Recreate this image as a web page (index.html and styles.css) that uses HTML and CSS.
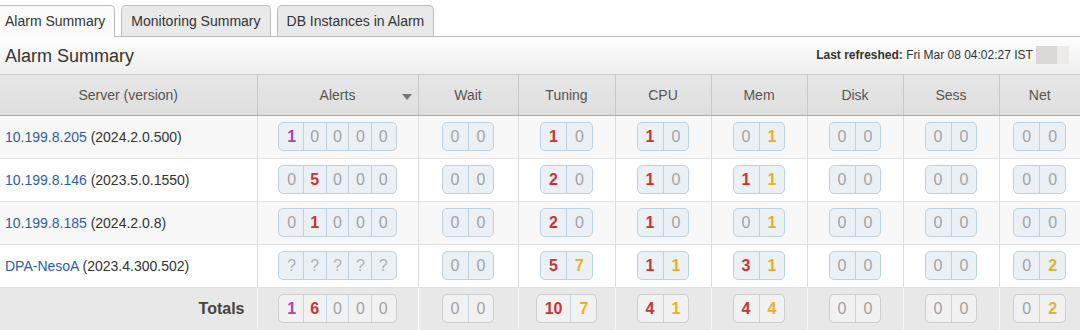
FILE: index.html
```html
<!DOCTYPE html>
<html lang="en">

<head>
    <meta charset="UTF-8">
    <meta name="viewport" content="width=device-width, initial-scale=1.0">
    <title>Alarm Summary</title>
    <link rel="stylesheet" href="styles.css">
</head>

<body>
    <ul class="tabs">
        <li class="tab active">Alarm Summary</li>
        <li class="tab">Monitoring Summary</li>
        <li class="tab">DB Instances in Alarm</li>
    </ul>

    <div class="titlebar">
        <h1>Alarm Summary</h1>
        <div class="refreshed">
            <b>Last refreshed:</b> Fri Mar 08 04:02:27 IST <span class="redacted"></span>
        </div>
    </div>

    <table class="summary">
        <colgroup>
            <col style="width:257px">
            <col style="width:161px">
            <col style="width:100px">
            <col style="width:97px">
            <col style="width:96px">
            <col style="width:96px">
            <col style="width:96px">
            <col style="width:96px">
            <col>
        </colgroup>
        <thead>
            <tr>
                <th>Server (version)</th>
                <th class="sorted">Alerts<span class="arrow"></span></th>
                <th>Wait</th>
                <th>Tuning</th>
                <th>CPU</th>
                <th>Mem</th>
                <th>Disk</th>
                <th>Sess</th>
                <th>Net</th>
            </tr>
        </thead>
        <tbody>
            <tr>
                <td class="server"><a href="#">10.199.8.205</a> (2024.2.0.500)</td>
                <td><span class="grp alerts"><span class="v p">1</span><span class="v">0</span><span class="v">0</span><span class="v">0</span><span class="v">0</span></span></td>
                <td><span class="grp"><span class="v">0</span><span class="v">0</span></span></td>
                <td><span class="grp"><span class="v r">1</span><span class="v">0</span></span></td>
                <td><span class="grp"><span class="v r">1</span><span class="v">0</span></span></td>
                <td><span class="grp"><span class="v">0</span><span class="v y">1</span></span></td>
                <td><span class="grp"><span class="v">0</span><span class="v">0</span></span></td>
                <td><span class="grp"><span class="v">0</span><span class="v">0</span></span></td>
                <td><span class="grp"><span class="v">0</span><span class="v">0</span></span></td>
            </tr>
            <tr>
                <td class="server"><a href="#">10.199.8.146</a> (2023.5.0.1550)</td>
                <td><span class="grp alerts"><span class="v">0</span><span class="v r">5</span><span class="v">0</span><span class="v">0</span><span class="v">0</span></span></td>
                <td><span class="grp"><span class="v">0</span><span class="v">0</span></span></td>
                <td><span class="grp"><span class="v r">2</span><span class="v">0</span></span></td>
                <td><span class="grp"><span class="v r">1</span><span class="v">0</span></span></td>
                <td><span class="grp"><span class="v r">1</span><span class="v y">1</span></span></td>
                <td><span class="grp"><span class="v">0</span><span class="v">0</span></span></td>
                <td><span class="grp"><span class="v">0</span><span class="v">0</span></span></td>
                <td><span class="grp"><span class="v">0</span><span class="v">0</span></span></td>
            </tr>
            <tr>
                <td class="server"><a href="#">10.199.8.185</a> (2024.2.0.8)</td>
                <td><span class="grp alerts"><span class="v">0</span><span class="v r">1</span><span class="v">0</span><span class="v">0</span><span class="v">0</span></span></td>
                <td><span class="grp"><span class="v">0</span><span class="v">0</span></span></td>
                <td><span class="grp"><span class="v r">2</span><span class="v">0</span></span></td>
                <td><span class="grp"><span class="v r">1</span><span class="v">0</span></span></td>
                <td><span class="grp"><span class="v">0</span><span class="v y">1</span></span></td>
                <td><span class="grp"><span class="v">0</span><span class="v">0</span></span></td>
                <td><span class="grp"><span class="v">0</span><span class="v">0</span></span></td>
                <td><span class="grp"><span class="v">0</span><span class="v">0</span></span></td>
            </tr>
            <tr>
                <td class="server"><a href="#">DPA-NesoA</a> (2023.4.300.502)</td>
                <td><span class="grp alerts"><span class="v q">?</span><span class="v q">?</span><span class="v q">?</span><span class="v q">?</span><span class="v q">?</span></span></td>
                <td><span class="grp"><span class="v">0</span><span class="v">0</span></span></td>
                <td><span class="grp"><span class="v r">5</span><span class="v y">7</span></span></td>
                <td><span class="grp"><span class="v r">1</span><span class="v y">1</span></span></td>
                <td><span class="grp"><span class="v r">3</span><span class="v y">1</span></span></td>
                <td><span class="grp"><span class="v">0</span><span class="v">0</span></span></td>
                <td><span class="grp"><span class="v">0</span><span class="v">0</span></span></td>
                <td><span class="grp"><span class="v">0</span><span class="v y">2</span></span></td>
            </tr>
        </tbody>
        <tfoot>
            <tr>
                <td class="label">Totals</td>
                <td><span class="grp alerts"><span class="v p">1</span><span class="v r">6</span><span class="v">0</span><span class="v">0</span><span class="v">0</span></span></td>
                <td><span class="grp"><span class="v">0</span><span class="v">0</span></span></td>
                <td><span class="grp"><span class="v r">10</span><span class="v y">7</span></span></td>
                <td><span class="grp"><span class="v r">4</span><span class="v y">1</span></span></td>
                <td><span class="grp"><span class="v r">4</span><span class="v y">4</span></span></td>
                <td><span class="grp"><span class="v">0</span><span class="v">0</span></span></td>
                <td><span class="grp"><span class="v">0</span><span class="v">0</span></span></td>
                <td><span class="grp"><span class="v">0</span><span class="v y">2</span></span></td>
            </tr>
        </tfoot>
    </table>
</body>

</html>
```

FILE: styles.css
```css
body {
    font-family: "Liberation Sans", Arial, sans-serif;
    margin: 0;
    padding: 0;
    background-color: #fff;
    color: #333;
    overflow: hidden;
}

.tabs {
    list-style: none;
    display: flex;
    gap: 6px;
    margin: 0;
    padding: 5px 0 0;
    border-bottom: 1px solid #bbb;
    height: 31px;
}

.tab {
    font-size: 14px;
    color: #333;
    padding: 0 9px;
    line-height: 30px;
    background-color: #e9e9e9;
    border: 1px solid #bbb;
    border-bottom: none;
    border-radius: 5px 5px 0 0;
}

.tab:first-child {
    margin-left: -5px;
}

.tab.active {
    background-color: #fafafa;
    height: 31px;
    margin-bottom: -1px;
}

.titlebar {
    display: flex;
    justify-content: space-between;
    align-items: center;
    height: 37px;
    padding: 0 11px 0 5px;
    background: linear-gradient(#fdfdfd, #eeeeee);
}

h1 {
    font-size: 18px;
    font-weight: normal;
    color: #333;
    margin: 0;
    padding-top: 1px;
}

.refreshed {
    font-size: 12px;
    color: #333;
}

.redacted {
    display: inline-block;
    vertical-align: middle;
    width: 33px;
    height: 18px;
    margin-top: -2px;
    background: linear-gradient(to right, #dcd8d8 64%, #eeeae7 64%);
}

.summary {
    width: 1080px;
    table-layout: fixed;
    border-collapse: collapse;
}

.summary th {
    font-size: 14px;
    font-weight: normal;
    color: #555;
    height: 40px;
    padding: 0;
    background: linear-gradient(#e6e6e6, #dedede);
    border-top: 1px solid #cfcfcf;
    border-bottom: 1px solid #aaa;
    border-left: 1px solid #c8c8c8;
    position: relative;
}

.summary th:first-child {
    border-left: none;
}

.arrow {
    position: absolute;
    right: 6px;
    top: 19px;
    width: 0;
    height: 0;
    border-left: 5px solid transparent;
    border-right: 5px solid transparent;
    border-top: 6px solid #777;
}

.summary td {
    height: 42px;
    padding: 0;
    text-align: center;
    border-left: 1px solid #ddd;
    border-bottom: 1px solid #e2e2e2;
}

.summary td:first-child {
    border-left: none;
}

.summary tbody tr:nth-child(odd) td {
    background-color: #f7f7f7;
}

.summary tbody tr:nth-child(even) td {
    background-color: #fff;
}

td.server {
    text-align: left;
    padding-left: 5px;
    font-size: 14px;
    color: #333;
}

td.server a {
    color: #1f62ad;
    text-decoration: none;
}

.summary tfoot td {
    background-color: #e8e8e8;
    border-left: 1px solid #f6f6f6;
    border-bottom: none;
}

td.label {
    text-align: right;
    padding-right: 12px;
    font-size: 16px;
    font-weight: bold;
    color: #444;
}

.grp {
    display: inline-flex;
    vertical-align: middle;
    background-color: #ebf0f4;
    border: 1px solid #bcd2e2;
    border-radius: 5px;
    overflow: hidden;
    margin-top: -1px;
}

tfoot .grp {
    background-color: #f1f1f1;
    border-color: #cdcdcd;
}

.v {
    font-size: 16px;
    line-height: 27px;
    color: #a3a3a3;
    padding: 0 8px;
    border-left: 1px solid #bcd2e2;
}

.v:first-child {
    border-left: none;
}

.alerts .v {
    padding: 0 6.5px;
}

.alerts .v:first-child {
    padding-left: 8.5px;
}

.alerts .v:last-child {
    padding-right: 8.5px;
}

tfoot .v {
    border-left-color: #c6d8e8;
}

.v.r {
    color: #c93434;
    font-weight: bold;
}

.v.p {
    color: #a945ad;
    font-weight: bold;
}

.v.y {
    color: #e6b127;
    font-weight: bold;
}

.v.q {
    color: #b0b0b0;
}
```
